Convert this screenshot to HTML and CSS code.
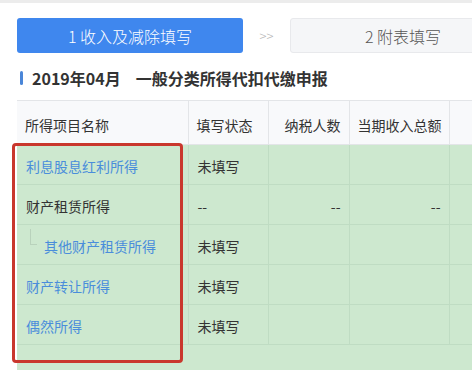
FILE: index.html
```html
<!DOCTYPE html>
<html lang="zh-CN">
<head>
<meta charset="utf-8">
<link rel="stylesheet" href="styles.css">
</head>
<body>
<div class="page">
  <div class="topbar"></div>
  <div class="steps">
    <div class="step step-active">1 收入及减除填写</div>
    <div class="step-sep">&gt;&gt;</div>
    <div class="step step-next">2 附表填写</div>
  </div>
  <div class="title"><span class="title-bar"></span><span class="title-date">2019年04月</span><span class="title-text">一般分类所得代扣代缴申报</span></div>
  <div class="table-wrap">
    <table class="grid">
      <colgroup>
        <col class="c1"><col class="c2"><col class="c3"><col class="c4"><col class="c5">
      </colgroup>
      <thead>
        <tr>
          <th class="left">所得项目名称</th>
          <th class="left">填写状态</th>
          <th class="right">纳税人数</th>
          <th class="right">当期收入总额</th>
          <th></th>
        </tr>
      </thead>
      <tbody>
        <tr>
          <td><span class="link">利息股息红利所得</span></td>
          <td>未填写</td>
          <td></td><td></td><td></td>
        </tr>
        <tr>
          <td>财产租赁所得</td>
          <td>--</td>
          <td class="right">--</td>
          <td class="right">--</td>
          <td></td>
        </tr>
        <tr>
          <td class="child"><span class="tree"></span><span class="link">其他财产租赁所得</span></td>
          <td>未填写</td>
          <td></td><td></td><td></td>
        </tr>
        <tr>
          <td><span class="link">财产转让所得</span></td>
          <td>未填写</td>
          <td></td><td></td><td></td>
        </tr>
        <tr>
          <td><span class="link">偶然所得</span></td>
          <td>未填写</td>
          <td></td><td></td><td></td>
        </tr>
      </tbody>
    </table>
  </div>
  <div class="highlight"></div>
</div>
</body>
</html>
```

FILE: styles.css
```css
html, body {
  margin: 0;
  padding: 0;
  width: 472px;
  height: 370px;
  overflow: hidden;
  background: #ffffff;
  font-family: "Noto Sans CJK SC", "Noto Sans", sans-serif;
  color: #333333;
}

.page {
  position: relative;
  width: 472px;
  height: 370px;
  overflow: hidden;
  display: flex;
  flex-direction: column;
}

.topbar {
  height: 3px;
  background: #ececec;
  flex: none;
}

.steps {
  flex: none;
  display: flex;
  align-items: center;
  margin-top: 15px;
  padding-left: 17px;
  height: 35px;
}

.step {
  height: 35px;
  box-sizing: border-box;
  display: flex;
  align-items: center;
  justify-content: center;
  font-size: 16px;
  font-weight: 300;
  border-radius: 3px;
  flex: none;
}

.step-active {
  width: 226px;
  background: #3f87ee;
  color: #ffffff;
}

.step-sep {
  width: 47px;
  text-align: center;
  font-size: 13px;
  font-weight: 300;
  color: #b8b8b8;
  flex: none;
}

.step-next {
  width: 226px;
  background: #f5f6f8;
  border: 1px solid #e8e9ec;
  color: #555555;
}

.title {
  flex: none;
  display: flex;
  align-items: center;
  margin-top: 14px;
  padding-left: 20px;
  height: 22px;
  font-size: 16px;
  font-weight: bold;
  color: #333333;
}

.title-bar {
  width: 3px;
  height: 14px;
  border-radius: 2px;
  background: #4a86d8;
  margin-right: 9px;
}

.title-text {
  margin-left: 15px;
}

.table-wrap {
  flex: 1;
  margin-top: 11px;
  margin-left: 17px;
  background: #cde8cf;
  overflow: hidden;
}

.grid {
  border-collapse: collapse;
  table-layout: fixed;
  width: 520px;
  font-size: 14px;
}

.c1 { width: 171px; }
.c2 { width: 80px; }
.c3 { width: 81px; }
.c4 { width: 100px; }
.c5 { width: 88px; }

.grid th {
  height: 44px;
  box-sizing: border-box;
  background: #f8f9fb;
  border: 1px solid #e3e5e8;
  border-left: none;
  font-weight: normal;
  color: #333333;
  padding: 4px 8px 0 8px;
  white-space: nowrap;
}

.grid th + th {
  border-left: 1px solid #e3e5e8;
}

.grid td {
  height: 40px;
  box-sizing: border-box;
  border-bottom: 1px solid #bfdcc3;
  padding: 2px 8px 0 9px;
  white-space: nowrap;
  color: #333333;
}

.grid td + td {
  border-left: 1px solid #bfdcc3;
}

.grid .left { text-align: left; }
.grid .right { text-align: right; }

.link {
  color: #4a8ddb;
}

.child {
  position: relative;
  padding-left: 27px !important;
}

.tree {
  position: absolute;
  left: 13px;
  top: 4px;
  width: 6px;
  height: 15px;
  border-left: 1px solid #b9d2bc;
  border-bottom: 1px solid #b9d2bc;
}

.highlight {
  position: absolute;
  left: 12px;
  top: 143px;
  width: 171px;
  height: 220px;
  box-sizing: border-box;
  border: 3px solid #c9372d;
  border-radius: 4px;
}
```
